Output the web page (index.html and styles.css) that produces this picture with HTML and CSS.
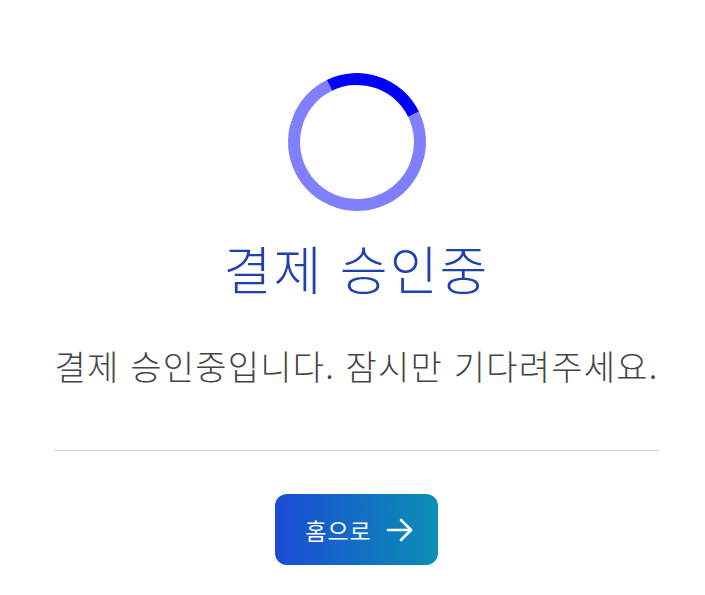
FILE: index.html
```html
<!doctype html>
<html lang="ko">
  <head>
    <meta charset="UTF-8" />
    <title>결제 승인중</title>
    <link rel="stylesheet" href="styles.css">
  </head>
  <body>
    <div class="status">
      <div class="spinner"></div>
      <h1 class="title">결제 승인중</h1>
      <p class="message">결제 승인중입니다. 잠시만 기다려주세요.</p>
      <hr class="divider" />
      <a class="home-btn" href="#">
        <span>홈으로</span>
        <svg width="28" height="24" viewBox="0 0 28 24" fill="none" stroke="#fff" stroke-width="2.6" stroke-linecap="round" stroke-linejoin="round">
          <path d="M2 12h23" />
          <path d="M15 2l10 10-10 10" />
        </svg>
      </a>
    </div>
  </body>
</html>
```

FILE: styles.css
```css
body {
  margin: 0;
  background: #fff;
  font-family: "Noto Sans CJK KR", "Noto Sans", sans-serif;
}

.status {
  width: 605px;
  margin: 0 0 0 54px;
  padding-top: 73px;
  display: flex;
  flex-direction: column;
  align-items: center;
}

.spinner {
  width: 114px;
  height: 114px;
  border-radius: 50%;
  border: 12px solid #8080ff;
  border-top-color: #0000ff;
  transform: rotate(19deg);
}

.title {
  margin: 22px 0 0;
  font-size: 52px;
  font-weight: 300;
  letter-spacing: 2px;
  line-height: 70px;
  color: #2040b0;
}

.message {
  margin: 40px 0 0;
  font-size: 34px;
  font-weight: 300;
  letter-spacing: 1.2px;
  line-height: 46px;
  color: #444;
}

.divider {
  width: 100%;
  margin: 61px 0 0;
  border: 0;
  border-top: 1px solid #d0d0d0;
}

.home-btn {
  margin-top: 43px;
  width: 163px;
  height: 71px;
  box-sizing: border-box;
  padding-left: 6px;
  border-radius: 12px;
  background: linear-gradient(90deg, #1c4bd4, #0a90b4);
  color: #fff;
  text-decoration: none;
  font-size: 23px;
  letter-spacing: 1px;
  display: flex;
  align-items: center;
  justify-content: center;
  gap: 14px;
}
```
